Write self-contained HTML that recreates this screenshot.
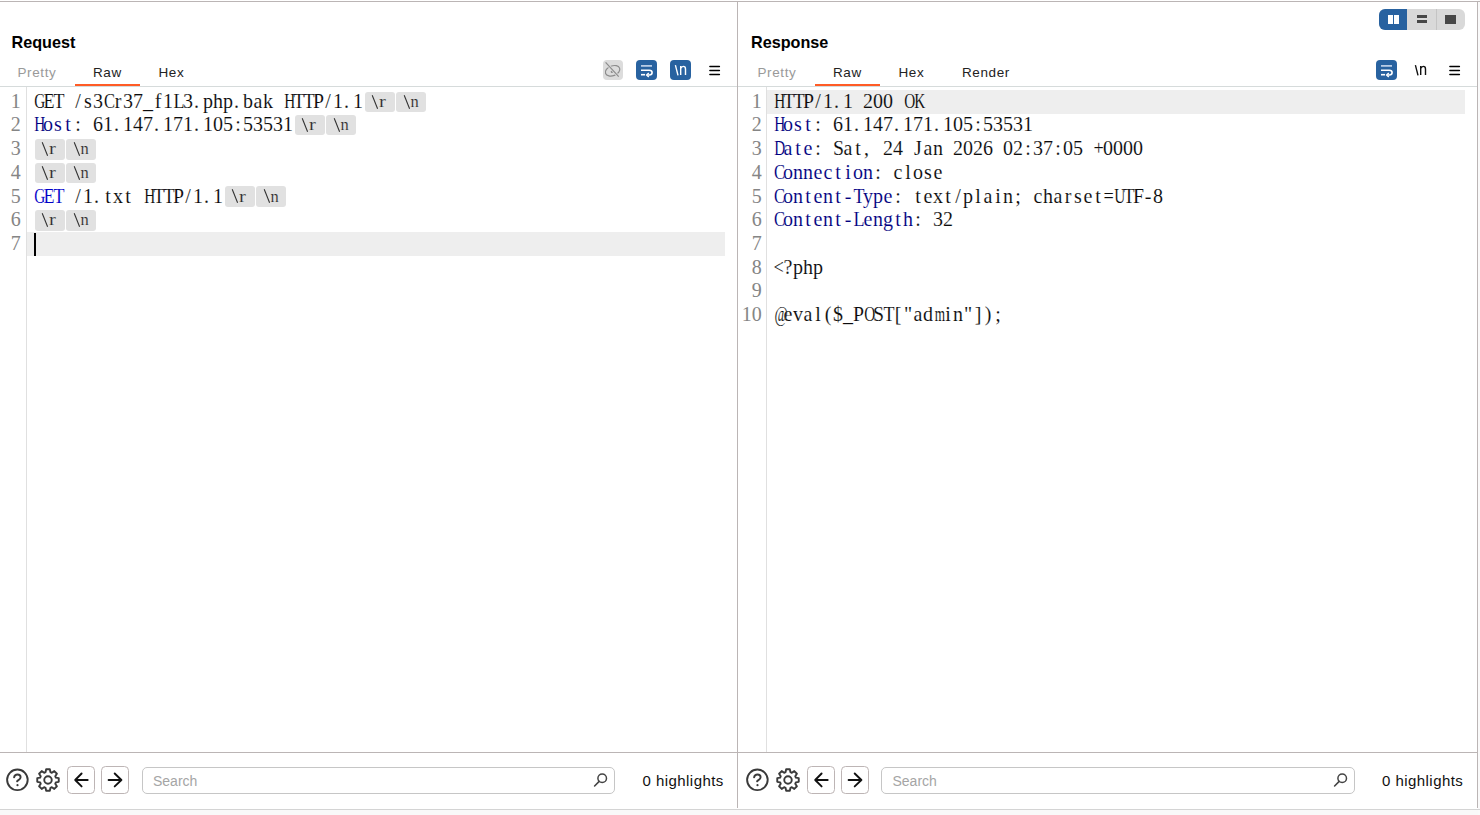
<!DOCTYPE html>
<html><head><meta charset="utf-8"><style>
*{margin:0;padding:0;box-sizing:border-box}
html,body{width:1480px;height:815px;overflow:hidden;background:#fff;position:relative;font-family:"Liberation Sans",sans-serif}
.a{position:absolute}
.line{position:absolute;background:#bbb5b5}
.title{position:absolute;font-weight:bold;font-size:16.2px;color:#000;line-height:20px}
.tab{position:absolute;font-size:13.5px;line-height:16px;color:#222;letter-spacing:0.6px}
.tab.dis{color:#9a9a9a}
.ul{position:absolute;height:2px;top:84px;background:#ff5c26}
.code{position:absolute;height:23.667px;line-height:23.667px;font-family:"Liberation Serif",serif;font-size:20px;white-space:pre;overflow:visible}
.code b{display:inline-block;width:10px;text-align:center;font-weight:normal}
.code b.l{text-align:left;padding-left:1px}
.tx{color:#0c0c0c}
.code{-webkit-text-stroke:0.1px #fff}
.code.onhl{-webkit-text-stroke-color:#eee}
.hd{color:#000080}
.gb{color:#0000c8}
.ln{position:absolute;width:40px;text-align:right;height:23.667px;line-height:23.667px;font-family:"Liberation Serif",serif;font-size:20px;color:#858585;white-space:pre}
.ln b,.pt b{display:inline-block;width:10px;text-align:center;font-weight:normal}
.pill{position:absolute;width:30px;height:20.5px;background:#e1e1e1;border-radius:3px;font-family:"Liberation Serif",serif;font-size:16px;line-height:21px;color:#222;white-space:pre}
.pt{position:absolute;top:-0.8px;line-height:21px;font-size:16.5px;-webkit-text-stroke:0.15px #e1e1e1;color:#262626}
.hl{position:absolute;width:698px;height:23.667px;background:#eeeeee}
.caret{position:absolute;width:2px;background:#000}
.gut{position:absolute;width:1px;background:#e0e0e0}
.hsep{position:absolute;height:1px;background:#d6dbdb}
.ibox{position:absolute;width:21px;height:20px;border-radius:4px}
.btn{position:absolute;width:28px;height:27.5px;border:1px solid #bdb5b5;border-radius:4.5px;background:#fff}
.search{position:absolute;height:26.5px;border:1px solid #c6c6c6;border-radius:5px;background:#fff}
.ph{position:absolute;font-size:14px;line-height:16px;color:#a5a5a5}
.hls{position:absolute;font-size:15px;line-height:18px;color:#111;letter-spacing:0.45px}
</style></head><body>
<div class="a" style="left:0;top:810px;width:1480px;height:5px;background:#f9f9f9"></div>
<div class="a" style="left:1478px;top:0;width:2px;height:815px;background:#fafafa"></div>
<div class="line" style="left:0;top:1px;width:1480px;height:1px"></div>
<div class="line" style="left:737px;top:1px;width:1px;height:807px"></div>
<div class="line" style="left:1477px;top:1px;width:1px;height:807px"></div>
<div class="a" style="left:0;top:809px;width:1480px;height:1px;background:#d4d4d4"></div>

<div class="title" style="left:11.5px;top:32px">Request</div>
<div class="tab dis" style="left:17.5px;top:65.3px">Pretty</div>
<div class="tab" style="left:93px;top:65.3px">Raw</div>
<div class="tab" style="left:158.5px;top:65.3px">Hex</div>
<div class="ul" style="left:75px;width:65px"></div>
<div class="title" style="left:751.0px;top:32px">Response</div>
<div class="tab dis" style="left:757.5px;top:65.3px">Pretty</div>
<div class="tab" style="left:833px;top:65.3px">Raw</div>
<div class="tab" style="left:898.5px;top:65.3px">Hex</div>
<div class="tab" style="left:962px;top:65.3px">Render</div>
<div class="ul" style="left:815px;width:65px"></div>

<div class="hsep" style="left:0;top:86px;width:737px"></div>
<div class="hsep" style="left:738px;top:86px;width:739px"></div>

<div class="ibox" style="left:603.2px;top:60.2px;width:20px;height:19.4px;background:#dcdcdc"><svg width="20" height="19.5" viewBox="0 0 20 19.5">
<g fill="none" stroke-width="1.2">
<ellipse cx="9.6" cy="10.8" rx="7.5" ry="4.9" transform="rotate(-21 9.6 10.8)" stroke="#8c8c8c"/>
<circle cx="8.9" cy="11.7" r="1.2" fill="#8c8c8c" stroke="none"/>
<path d="M2.6 2.4 L15.7 16.6" stroke="#dcdcdc" stroke-width="2.8"/>
<path d="M2.6 2.4 L15.7 16.6" stroke="#8c8c8c"/>
</g></svg></div>
<div class="ibox" style="left:636px;top:60px;background:#2862a0"><svg width="21" height="20" viewBox="0 0 21 20">
<path d="M5 5.9 H16" stroke="#c9d9ee" stroke-width="1.6"/>
<path d="M5 10.2 H13.3 Q16.1 10.2 16.1 12.6 Q16.1 15 13.3 15 H11.5" fill="none" stroke="#fff" stroke-width="1.6"/>
<path d="M12.8 12.9 L10.6 15 L12.8 17.1" fill="none" stroke="#fff" stroke-width="1.4"/>
<path d="M5 14.7 H9" stroke="#fff" stroke-width="1.6"/></svg></div>
<div class="ibox" style="left:670px;top:60px;background:#2862a0"><svg width="21" height="20" viewBox="0 0 21 20">
<path d="M5.4 5.1 L8.0 15.3" stroke="#fff" stroke-width="1.4"/>
<path d="M10.7 6.1 V15.1 M10.7 8.6 Q11.6 6.4 13.3 6.4 Q15.5 6.4 15.5 9 V15.1" fill="none" stroke="#fff" stroke-width="1.4"/></svg></div>
<div class="a" style="left:708px;top:65px"><svg width="13" height="14" viewBox="0 0 13 14">
<path d="M1.9 1.5 H11.4 M1.9 5.6 H11.4 M1.9 9.6 H11.4" stroke="#000" stroke-width="1.5" stroke-linecap="round"/></svg></div>

<div class="a" style="left:1379px;top:9px;width:86px;height:21px;border-radius:6px;background:#d9d9d9;overflow:hidden">
 <div class="a" style="left:0;top:0;width:27.5px;height:21px;background:#2862a0"></div>
 <div class="a" style="left:56.5px;top:0;width:1px;height:21px;background:#c4c4c4"></div>
 <div class="a" style="left:9px;top:6px;width:4.5px;height:9px;background:#fff"></div>
 <div class="a" style="left:15px;top:6px;width:4.5px;height:9px;background:#fff"></div>
 <div class="a" style="left:37.5px;top:6px;width:10.5px;height:3px;background:#474747"></div>
 <div class="a" style="left:37.5px;top:11px;width:10.5px;height:3.3px;background:#474747"></div>
 <div class="a" style="left:66px;top:6px;width:11px;height:8.5px;background:#474747"></div>
</div>
<div class="ibox" style="left:1376px;top:60px;background:#2862a0"><svg width="21" height="20" viewBox="0 0 21 20">
<path d="M5 5.9 H16" stroke="#c9d9ee" stroke-width="1.6"/>
<path d="M5 10.2 H13.3 Q16.1 10.2 16.1 12.6 Q16.1 15 13.3 15 H11.5" fill="none" stroke="#fff" stroke-width="1.6"/>
<path d="M12.8 12.9 L10.6 15 L12.8 17.1" fill="none" stroke="#fff" stroke-width="1.4"/>
<path d="M5 14.7 H9" stroke="#fff" stroke-width="1.6"/></svg></div>
<div class="a" style="left:1410px;top:60px"><svg width="21" height="20" viewBox="0 0 21 20">
<path d="M5.4 5.1 L8.0 15.3" stroke="#111" stroke-width="1.4"/>
<path d="M10.7 6.1 V15.1 M10.7 8.6 Q11.6 6.4 13.3 6.4 Q15.5 6.4 15.5 9 V15.1" fill="none" stroke="#111" stroke-width="1.4"/></svg></div>
<div class="a" style="left:1448px;top:65px"><svg width="13" height="14" viewBox="0 0 13 14">
<path d="M1.9 1.5 H11.4 M1.9 5.6 H11.4 M1.9 9.6 H11.4" stroke="#000" stroke-width="1.5" stroke-linecap="round"/></svg></div>

<div class="gut" style="left:26px;top:87px;height:665px"></div>
<div class="gut" style="left:766px;top:87px;height:665px"></div>

<div class="ln" style="top:90.00px;left:-19.3px"><b>1</b></div>
<div class="code tx" style="top:90.00px;left:33px;width:330px"><b style="transform:scaleX(0.762)">G</b><b style="transform:scaleX(0.900)">E</b><b style="transform:scaleX(0.900)">T</b><b> </b><b>/</b><b>s</b><b>3</b><b style="transform:scaleX(0.825)">C</b><b>r</b><b>3</b><b>7</b><b>_</b><b>f</b><b>1</b><b style="transform:scaleX(0.900)">L</b><b>3</b><b class="l">.</b><b>p</b><b>h</b><b>p</b><b class="l">.</b><b>b</b><b>a</b><b>k</b><b> </b><b style="transform:scaleX(0.762)">H</b><b style="transform:scaleX(0.900)">T</b><b style="transform:scaleX(0.900)">T</b><b style="transform:scaleX(0.989)">P</b><b>/</b><b>1</b><b class="l">.</b><b>1</b></div>
<div class="pill" style="top:91.67px;left:365.2px"><svg class="a" style="left:0;top:0" width="30" height="21"><path d="M7.2 3.2 L12.600000000000001 16.8" stroke="#2e2e2e" stroke-width="1.05"/></svg><div class="pt" style="left:14.299999999999999px;transform:scaleX(1.25);transform-origin:0 0">r</div></div>
<div class="pill" style="top:91.67px;left:396.2px"><svg class="a" style="left:0;top:0" width="30" height="21"><path d="M8.2 3.2 L13.6 16.8" stroke="#2e2e2e" stroke-width="1.05"/></svg><div class="pt" style="left:14.2px">n</div></div>
<div class="ln" style="top:113.17px;left:-19.3px"><b>2</b></div>
<div class="code hd" style="top:113.17px;left:33px;width:40px"><b style="transform:scaleX(0.762)">H</b><b>o</b><b>s</b><b>t</b></div>
<div class="code tx" style="top:113.17px;left:73px;width:220px"><b>:</b><b> </b><b>6</b><b>1</b><b class="l">.</b><b>1</b><b>4</b><b>7</b><b class="l">.</b><b>1</b><b>7</b><b>1</b><b class="l">.</b><b>1</b><b>0</b><b>5</b><b>:</b><b>5</b><b>3</b><b>5</b><b>3</b><b>1</b></div>
<div class="pill" style="top:114.84px;left:295.2px"><svg class="a" style="left:0;top:0" width="30" height="21"><path d="M7.2 3.2 L12.600000000000001 16.8" stroke="#2e2e2e" stroke-width="1.05"/></svg><div class="pt" style="left:14.299999999999999px;transform:scaleX(1.25);transform-origin:0 0">r</div></div>
<div class="pill" style="top:114.84px;left:326.2px"><svg class="a" style="left:0;top:0" width="30" height="21"><path d="M8.2 3.2 L13.6 16.8" stroke="#2e2e2e" stroke-width="1.05"/></svg><div class="pt" style="left:14.2px">n</div></div>
<div class="ln" style="top:137.33px;left:-19.3px"><b>3</b></div>
<div class="pill" style="top:139.00px;left:35.2px"><svg class="a" style="left:0;top:0" width="30" height="21"><path d="M7.2 3.2 L12.600000000000001 16.8" stroke="#2e2e2e" stroke-width="1.05"/></svg><div class="pt" style="left:14.299999999999999px;transform:scaleX(1.25);transform-origin:0 0">r</div></div>
<div class="pill" style="top:139.00px;left:66.2px"><svg class="a" style="left:0;top:0" width="30" height="21"><path d="M8.2 3.2 L13.6 16.8" stroke="#2e2e2e" stroke-width="1.05"/></svg><div class="pt" style="left:14.2px">n</div></div>
<div class="ln" style="top:161.00px;left:-19.3px"><b>4</b></div>
<div class="pill" style="top:162.67px;left:35.2px"><svg class="a" style="left:0;top:0" width="30" height="21"><path d="M7.2 3.2 L12.600000000000001 16.8" stroke="#2e2e2e" stroke-width="1.05"/></svg><div class="pt" style="left:14.299999999999999px;transform:scaleX(1.25);transform-origin:0 0">r</div></div>
<div class="pill" style="top:162.67px;left:66.2px"><svg class="a" style="left:0;top:0" width="30" height="21"><path d="M8.2 3.2 L13.6 16.8" stroke="#2e2e2e" stroke-width="1.05"/></svg><div class="pt" style="left:14.2px">n</div></div>
<div class="ln" style="top:184.67px;left:-19.3px"><b>5</b></div>
<div class="code gb" style="top:184.67px;left:33px;width:30px"><b style="transform:scaleX(0.762)">G</b><b style="transform:scaleX(0.900)">E</b><b style="transform:scaleX(0.900)">T</b></div>
<div class="code tx" style="top:184.67px;left:63px;width:160px"><b> </b><b>/</b><b>1</b><b class="l">.</b><b>t</b><b>x</b><b>t</b><b> </b><b style="transform:scaleX(0.762)">H</b><b style="transform:scaleX(0.900)">T</b><b style="transform:scaleX(0.900)">T</b><b style="transform:scaleX(0.989)">P</b><b>/</b><b>1</b><b class="l">.</b><b>1</b></div>
<div class="pill" style="top:186.34px;left:225.2px"><svg class="a" style="left:0;top:0" width="30" height="21"><path d="M7.2 3.2 L12.600000000000001 16.8" stroke="#2e2e2e" stroke-width="1.05"/></svg><div class="pt" style="left:14.299999999999999px;transform:scaleX(1.25);transform-origin:0 0">r</div></div>
<div class="pill" style="top:186.34px;left:256.2px"><svg class="a" style="left:0;top:0" width="30" height="21"><path d="M8.2 3.2 L13.6 16.8" stroke="#2e2e2e" stroke-width="1.05"/></svg><div class="pt" style="left:14.2px">n</div></div>
<div class="ln" style="top:208.34px;left:-19.3px"><b>6</b></div>
<div class="pill" style="top:210.00px;left:35.2px"><svg class="a" style="left:0;top:0" width="30" height="21"><path d="M7.2 3.2 L12.600000000000001 16.8" stroke="#2e2e2e" stroke-width="1.05"/></svg><div class="pt" style="left:14.299999999999999px;transform:scaleX(1.25);transform-origin:0 0">r</div></div>
<div class="pill" style="top:210.00px;left:66.2px"><svg class="a" style="left:0;top:0" width="30" height="21"><path d="M8.2 3.2 L13.6 16.8" stroke="#2e2e2e" stroke-width="1.05"/></svg><div class="pt" style="left:14.2px">n</div></div>
<div class="hl" style="top:232.00px;left:27px"></div>
<div class="ln" style="top:232.00px;left:-19.3px"><b>7</b></div>
<div class="caret" style="left:34px;top:233px;height:23px"></div>
<div class="hl" style="top:90.00px;left:767px"></div>
<div class="ln" style="top:90.00px;left:721.7px"><b>1</b></div>
<div class="code tx onhl" style="top:90.00px;left:773px;width:150px"><b style="transform:scaleX(0.762)">H</b><b style="transform:scaleX(0.900)">T</b><b style="transform:scaleX(0.900)">T</b><b style="transform:scaleX(0.989)">P</b><b>/</b><b>1</b><b class="l">.</b><b>1</b><b> </b><b>2</b><b>0</b><b>0</b><b> </b><b style="transform:scaleX(0.762)">O</b><b style="transform:scaleX(0.762)">K</b></div>
<div class="ln" style="top:113.17px;left:721.7px"><b>2</b></div>
<div class="code hd" style="top:113.17px;left:773px;width:40px"><b style="transform:scaleX(0.762)">H</b><b>o</b><b>s</b><b>t</b></div>
<div class="code tx" style="top:113.17px;left:813px;width:220px"><b>:</b><b> </b><b>6</b><b>1</b><b class="l">.</b><b>1</b><b>4</b><b>7</b><b class="l">.</b><b>1</b><b>7</b><b>1</b><b class="l">.</b><b>1</b><b>0</b><b>5</b><b>:</b><b>5</b><b>3</b><b>5</b><b>3</b><b>1</b></div>
<div class="ln" style="top:137.33px;left:721.7px"><b>3</b></div>
<div class="code hd" style="top:137.33px;left:773px;width:40px"><b style="transform:scaleX(0.762)">D</b><b>a</b><b>t</b><b>e</b></div>
<div class="code tx" style="top:137.33px;left:813px;width:330px"><b>:</b><b> </b><b style="transform:scaleX(0.989)">S</b><b>a</b><b>t</b><b class="l">,</b><b> </b><b>2</b><b>4</b><b> </b><b>J</b><b>a</b><b>n</b><b> </b><b>2</b><b>0</b><b>2</b><b>6</b><b> </b><b>0</b><b>2</b><b>:</b><b>3</b><b>7</b><b>:</b><b>0</b><b>5</b><b> </b><b style="transform:scaleX(0.913)">+</b><b>0</b><b>0</b><b>0</b><b>0</b></div>
<div class="ln" style="top:161.00px;left:721.7px"><b>4</b></div>
<div class="code hd" style="top:161.00px;left:773px;width:100px"><b style="transform:scaleX(0.825)">C</b><b>o</b><b>n</b><b>n</b><b>e</b><b>c</b><b>t</b><b>i</b><b>o</b><b>n</b></div>
<div class="code tx" style="top:161.00px;left:873px;width:70px"><b>:</b><b> </b><b>c</b><b>l</b><b>o</b><b>s</b><b>e</b></div>
<div class="ln" style="top:184.67px;left:721.7px"><b>5</b></div>
<div class="code hd" style="top:184.67px;left:773px;width:120px"><b style="transform:scaleX(0.825)">C</b><b>o</b><b>n</b><b>t</b><b>e</b><b>n</b><b>t</b><b>-</b><b style="transform:scaleX(0.900)">T</b><b>y</b><b>p</b><b>e</b></div>
<div class="code tx" style="top:184.67px;left:893px;width:270px"><b>:</b><b> </b><b>t</b><b>e</b><b>x</b><b>t</b><b>/</b><b>p</b><b>l</b><b>a</b><b>i</b><b>n</b><b>;</b><b> </b><b>c</b><b>h</b><b>a</b><b>r</b><b>s</b><b>e</b><b>t</b><b style="transform:scaleX(0.913)">=</b><b style="transform:scaleX(0.762)">U</b><b style="transform:scaleX(0.900)">T</b><b style="transform:scaleX(0.989)">F</b><b>-</b><b>8</b></div>
<div class="ln" style="top:208.34px;left:721.7px"><b>6</b></div>
<div class="code hd" style="top:208.34px;left:773px;width:140px"><b style="transform:scaleX(0.825)">C</b><b>o</b><b>n</b><b>t</b><b>e</b><b>n</b><b>t</b><b>-</b><b style="transform:scaleX(0.900)">L</b><b>e</b><b>n</b><b>g</b><b>t</b><b>h</b></div>
<div class="code tx" style="top:208.34px;left:913px;width:40px"><b>:</b><b> </b><b>3</b><b>2</b></div>
<div class="ln" style="top:232.00px;left:721.7px"><b>7</b></div>
<div class="ln" style="top:255.67px;left:721.7px"><b>8</b></div>
<div class="code tx" style="top:255.67px;left:773px;width:50px"><b style="transform:scaleX(0.913)">&lt;</b><b>?</b><b>p</b><b>h</b><b>p</b></div>
<div class="ln" style="top:279.34px;left:721.7px"><b>9</b></div>
<div class="ln" style="top:303.00px;left:721.7px"><b>1</b><b>0</b></div>
<div class="code tx" style="top:303.00px;left:773px;width:230px"><b style="transform:scaleX(0.720)">@</b><b>e</b><b>v</b><b>a</b><b>l</b><b>(</b><b>$</b><b>_</b><b style="transform:scaleX(0.989)">P</b><b style="transform:scaleX(0.762)">O</b><b style="transform:scaleX(0.989)">S</b><b style="transform:scaleX(0.900)">T</b><b>[</b><b>"</b><b>a</b><b>d</b><b style="transform:scaleX(0.662)">m</b><b>i</b><b>n</b><b>"</b><b>]</b><b>)</b><b>;</b></div>

<div class="line" style="left:0;top:752px;width:737px;height:1px"></div>
<div class="line" style="left:738px;top:752px;width:739px;height:1px"></div>

<svg class="a" style="left:4px;top:766px" width="28" height="28" viewBox="0 0 28 28">
<circle cx="13.4" cy="13.85" r="10.3" fill="none" stroke="#3a3a3a" stroke-width="1.9"/>
<path d="M10.1 11.4 Q10.6 8.5 13.5 8.5 Q16.6 8.5 16.6 11.2 Q16.6 12.9 14.5 14.1 Q13.3 14.8 13.1 15.3" fill="none" stroke="#3a3a3a" stroke-width="1.9" stroke-linecap="round"/>
<circle cx="13.5" cy="19.2" r="1.1" fill="#3a3a3a"/></svg>
<svg class="a" style="left:34.4px;top:765.9px" width="28" height="28" viewBox="0 0 28 28">
<path d="M21.83 11.58 L24.74 12.16 L24.74 15.84 L21.83 16.42 L21.25 17.83 L22.90 20.29 L20.29 22.90 L17.83 21.25 L16.42 21.83 L15.84 24.74 L12.16 24.74 L11.58 21.83 L10.17 21.25 L7.71 22.90 L5.10 20.29 L6.75 17.83 L6.17 16.42 L3.26 15.84 L3.26 12.16 L6.17 11.58 L6.75 10.17 L5.10 7.71 L7.71 5.10 L10.17 6.75 L11.58 6.17 L12.16 3.26 L15.84 3.26 L16.42 6.17 L17.83 6.75 L20.29 5.10 L22.90 7.71 L21.25 10.17Z" fill="none" stroke="#3a3a3a" stroke-width="1.9" stroke-linejoin="round"/>
<circle cx="14" cy="14" r="3.75" fill="none" stroke="#3a3a3a" stroke-width="1.9"/></svg>
<div class="btn" style="left:67px;top:766px"></div>
<svg class="a" style="left:67px;top:766px" width="28" height="28" viewBox="0 0 28 28">
<path d="M8.2 14 H20.7 M14.6 7.5 L8.2 14 L14.6 20.4" fill="none" stroke="#111" stroke-width="1.9" stroke-linecap="round" stroke-linejoin="round"/></svg>
<div class="btn" style="left:101px;top:766px"></div>
<svg class="a" style="left:101px;top:766px" width="28" height="28" viewBox="0 0 28 28">
<path d="M7.6 14 H20.4 M13.7 7.5 L20.4 14 L13.7 20.4" fill="none" stroke="#111" stroke-width="1.9" stroke-linecap="round" stroke-linejoin="round"/></svg>
<div class="search" style="left:141.5px;top:767px;width:473.5px"></div>
<div class="ph" style="left:153px;top:773px">Search</div>
<svg class="a" style="left:593.0px;top:772px" width="16" height="16" viewBox="0 0 16 16">
<circle cx="9.2" cy="6.3" r="4.3" fill="none" stroke="#444" stroke-width="1.5"/>
<path d="M6.2 9.4 L1.6 14" stroke="#444" stroke-width="1.6" stroke-linecap="round"/></svg>
<div class="hls" style="left:642.5px;top:772px">0 highlights</div>
<svg class="a" style="left:743.5px;top:766px" width="28" height="28" viewBox="0 0 28 28">
<circle cx="13.4" cy="13.85" r="10.3" fill="none" stroke="#3a3a3a" stroke-width="1.9"/>
<path d="M10.1 11.4 Q10.6 8.5 13.5 8.5 Q16.6 8.5 16.6 11.2 Q16.6 12.9 14.5 14.1 Q13.3 14.8 13.1 15.3" fill="none" stroke="#3a3a3a" stroke-width="1.9" stroke-linecap="round"/>
<circle cx="13.5" cy="19.2" r="1.1" fill="#3a3a3a"/></svg>
<svg class="a" style="left:773.9px;top:765.9px" width="28" height="28" viewBox="0 0 28 28">
<path d="M21.83 11.58 L24.74 12.16 L24.74 15.84 L21.83 16.42 L21.25 17.83 L22.90 20.29 L20.29 22.90 L17.83 21.25 L16.42 21.83 L15.84 24.74 L12.16 24.74 L11.58 21.83 L10.17 21.25 L7.71 22.90 L5.10 20.29 L6.75 17.83 L6.17 16.42 L3.26 15.84 L3.26 12.16 L6.17 11.58 L6.75 10.17 L5.10 7.71 L7.71 5.10 L10.17 6.75 L11.58 6.17 L12.16 3.26 L15.84 3.26 L16.42 6.17 L17.83 6.75 L20.29 5.10 L22.90 7.71 L21.25 10.17Z" fill="none" stroke="#3a3a3a" stroke-width="1.9" stroke-linejoin="round"/>
<circle cx="14" cy="14" r="3.75" fill="none" stroke="#3a3a3a" stroke-width="1.9"/></svg>
<div class="btn" style="left:806.5px;top:766px"></div>
<svg class="a" style="left:806.5px;top:766px" width="28" height="28" viewBox="0 0 28 28">
<path d="M8.2 14 H20.7 M14.6 7.5 L8.2 14 L14.6 20.4" fill="none" stroke="#111" stroke-width="1.9" stroke-linecap="round" stroke-linejoin="round"/></svg>
<div class="btn" style="left:840.5px;top:766px"></div>
<svg class="a" style="left:840.5px;top:766px" width="28" height="28" viewBox="0 0 28 28">
<path d="M7.6 14 H20.4 M13.7 7.5 L20.4 14 L13.7 20.4" fill="none" stroke="#111" stroke-width="1.9" stroke-linecap="round" stroke-linejoin="round"/></svg>
<div class="search" style="left:881.0px;top:767px;width:474px"></div>
<div class="ph" style="left:892.5px;top:773px">Search</div>
<svg class="a" style="left:1333.0px;top:772px" width="16" height="16" viewBox="0 0 16 16">
<circle cx="9.2" cy="6.3" r="4.3" fill="none" stroke="#444" stroke-width="1.5"/>
<path d="M6.2 9.4 L1.6 14" stroke="#444" stroke-width="1.6" stroke-linecap="round"/></svg>
<div class="hls" style="left:1382.0px;top:772px">0 highlights</div>
</body></html>
